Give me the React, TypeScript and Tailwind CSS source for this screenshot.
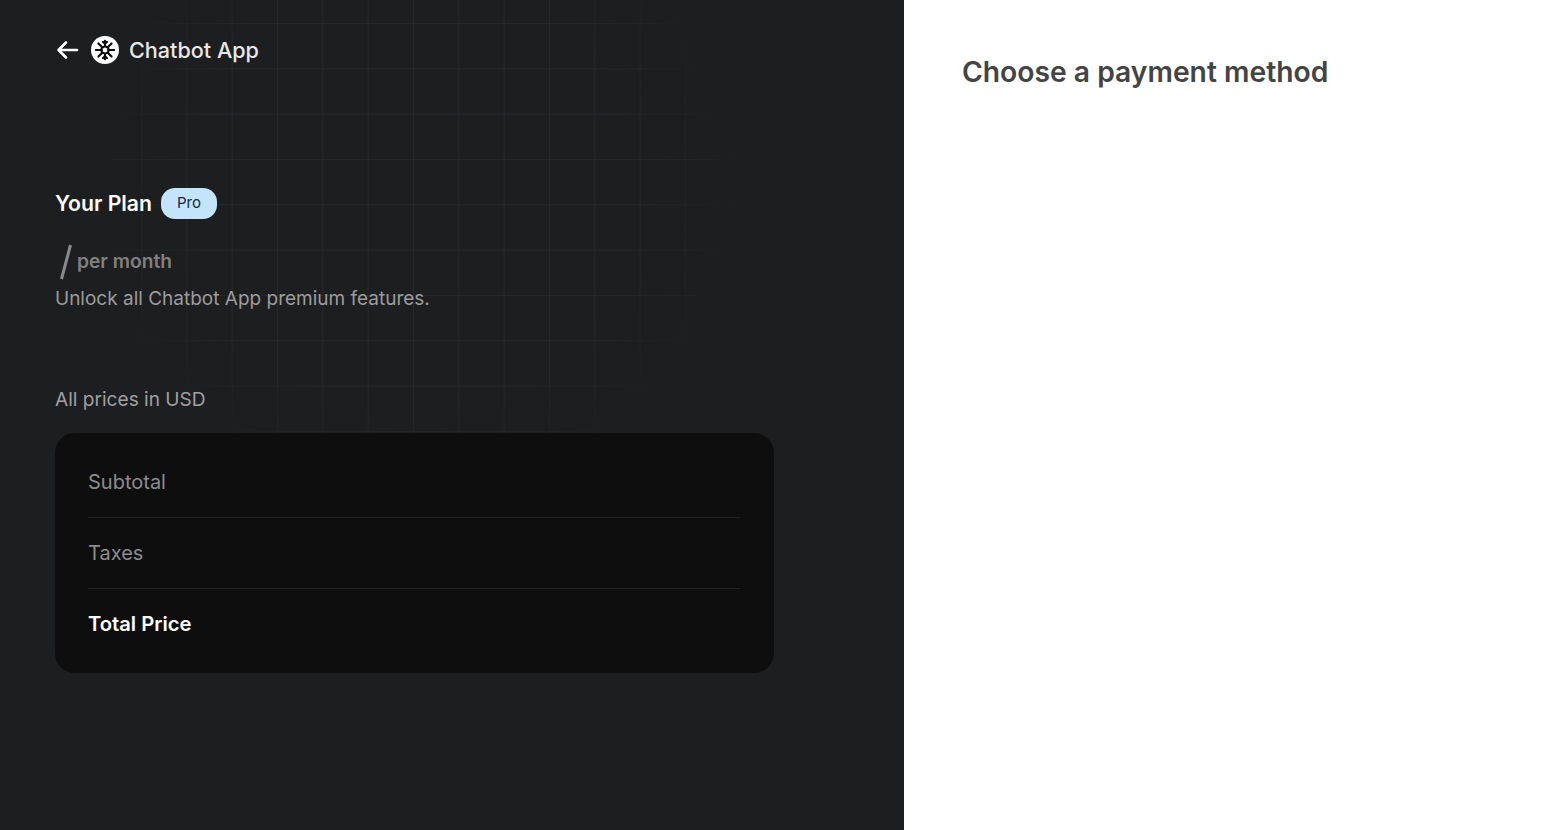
export default function App() {
  return (
    <div className="flex h-[830px] w-full overflow-hidden bg-white font-['Inter',sans-serif]">
      <div className="relative w-[904px] shrink-0 bg-[#1c1e20]">
        <div className="pointer-events-none absolute inset-0 bg-[linear-gradient(to_right,#27292b_1px,transparent_1px),linear-gradient(to_bottom,#27292b_1px,transparent_1px)] bg-[size:45.33px_45.33px] bg-[position:5px_23px] [mask-image:radial-gradient(ellipse_340px_320px_at_414px_190px,black_65%,transparent_100%)]" />
        <div className="relative flex flex-col pl-[55px]">
          <div className="mt-[35px] flex h-[30px] items-center">
            <svg width="24" height="24" viewBox="0 0 24 24" fill="none" stroke="white" strokeWidth="2.6" strokeLinecap="round" strokeLinejoin="round">
              <path d="M22 12H3.500M11 4.500 3.500 12l7.500 7.500" />
            </svg>
            <div className="ml-[12px] flex h-[28px] w-[28px] items-center justify-center rounded-full bg-white">
              <svg width="22" height="22" viewBox="0 0 24 24" fill="none" stroke="#0c0c0c" strokeWidth="2.3" strokeLinecap="round" strokeLinejoin="round">
                <path d="M12 7.800 15.700 9.900V14.100L12 16.200 8.300 14.100V9.900Z" />
                <path d="M12 7.800V2M12 16.200V22M8.300 12H2M15.700 12H22M8.800 8.800 4.800 4.800M15.200 15.200 19.200 19.200M15.200 8.800 19.200 4.800M8.800 15.200 4.800 19.200" />
                <path d="M9.800 3.200 12 5l2.200-1.800M9.800 20.800 12 19l2.200 1.800" />
              </svg>
            </div>
            <span className="ml-[10px] text-[21.6px] font-medium leading-[30px] text-[#e8e8e8]">Chatbot App</span>
          </div>

          <div className="mt-[123px] flex h-[30px] items-center">
            <span className="text-[21.2px] font-semibold leading-[30px] text-white">Your Plan</span>
            <span className="ml-[9px] flex h-[31px] w-[56px] items-center justify-center rounded-[14px] bg-[#c4e4fc] text-[15px] font-normal text-[#0e2a47]">Pro</span>
          </div>

          <div className="mt-[24px] flex h-[38px] items-center pl-[3px]">
            <svg width="16" height="38" viewBox="0 0 16 38" fill="none" stroke="#8a8a8a" strokeWidth="3">
              <path d="M12.500 3 3.500 37" />
            </svg>
            <span className="ml-[3px] text-[19.2px] font-semibold leading-[28px] text-[#808080]">per month</span>
          </div>
          <p className="mt-[5px] text-[19px] leading-[28px] text-[#9c9c9c]">Unlock all Chatbot App premium features.</p>

          <p className="mt-[72px] text-[19.1px] leading-[28px] text-[#a0a0a0]">All prices in USD</p>

          <div className="mt-[20px] flex h-[240px] w-[719px] flex-col rounded-[20px] bg-[#0e0e0f] pl-[33px] pr-[34px] pt-[14px]">
            <div className="flex h-[71px] items-center border-b border-[#222324] pb-px text-[20px] text-[#8c8c8c]">Subtotal</div>
            <div className="flex h-[71px] items-center border-b border-[#222324] pb-px text-[20px] text-[#8c8c8c]">Taxes</div>
            <div className="flex h-[71px] items-center text-[20.2px] font-semibold text-white">Total Price</div>
          </div>
        </div>
      </div>

      <div className="flex-1 bg-white pl-[58px] pt-[52px]">
        <h1 className="text-[28.25px] font-semibold leading-[40px] text-[#444444]">Choose a payment method</h1>
      </div>
    </div>
  );
}
